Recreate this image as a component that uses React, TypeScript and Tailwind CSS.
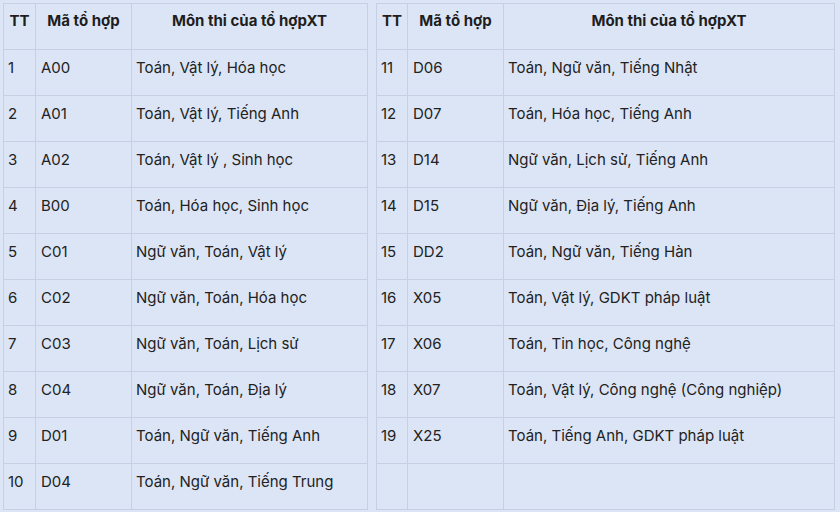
const left = [
  ['1', 'A00', 'Toán, Vật lý, Hóa học'],
  ['2', 'A01', 'Toán, Vật lý, Tiếng Anh'],
  ['3', 'A02', 'Toán, Vật lý , Sinh học'],
  ['4', 'B00', 'Toán, Hóa học, Sinh học'],
  ['5', 'C01', 'Ngữ văn, Toán, Vật lý'],
  ['6', 'C02', 'Ngữ văn, Toán, Hóa học'],
  ['7', 'C03', 'Ngữ văn, Toán, Lịch sử'],
  ['8', 'C04', 'Ngữ văn, Toán, Địa lý'],
  ['9', 'D01', 'Toán, Ngữ văn, Tiếng Anh'],
  ['10', 'D04', 'Toán, Ngữ văn, Tiếng Trung'],
];

const right = [
  ['11', 'D06', 'Toán, Ngữ văn, Tiếng Nhật'],
  ['12', 'D07', 'Toán, Hóa học, Tiếng Anh'],
  ['13', 'D14', 'Ngữ văn, Lịch sử, Tiếng Anh'],
  ['14', 'D15', 'Ngữ văn, Địa lý, Tiếng Anh'],
  ['15', 'DD2', 'Toán, Ngữ văn, Tiếng Hàn'],
  ['16', 'X05', 'Toán, Vật lý, GDKT pháp luật'],
  ['17', 'X06', 'Toán, Tin học, Công nghệ'],
  ['18', 'X07', 'Toán, Vật lý, Công nghệ (Công nghiệp)'],
  ['19', 'X25', 'Toán, Tiếng Anh, GDKT pháp luật'],
  ['', '', ''],
];

function ComboTable({ rows, widths }: { rows: string[][]; widths: string[] }) {
  const th = 'h-[46px] border border-[#c6d0e2] pt-[7px] align-top text-center font-bold text-[#1e1e1e]';
  const td = 'h-[46px] border border-[#c6d0e2] pl-1 pt-2 align-top text-left text-[#222]';
  return (
    <table className="border-collapse table-fixed text-[15px] leading-5">
      <colgroup>
        {widths.map((w, i) => (
          <col key={i} className={w} />
        ))}
      </colgroup>
      <thead>
        <tr>
          <th className={th}>TT</th>
          <th className={th}>Mã tổ hợp</th>
          <th className={th}>Môn thi của tổ hợpXT</th>
        </tr>
      </thead>
      <tbody>
        {rows.map((r, i) => (
          <tr key={i}>
            <td className={td}>{r[0]}</td>
            <td className={td + ' pl-[5px]'}>{r[1]}</td>
            <td className={td}>{r[2]}</td>
          </tr>
        ))}
      </tbody>
    </table>
  );
}

export default function App() {
  return (
    <div
      className="w-[840px] h-[512px] overflow-hidden bg-[#dce5f6] pt-[3px] pl-[3px] flex items-start gap-[8px]"
      style={{ fontFamily: 'Inter, "Noto Sans", sans-serif' }}
    >
      <ComboTable rows={left} widths={['w-[32px]', 'w-[96px]', 'w-[236px]']} />
      <ComboTable rows={right} widths={['w-[31px]', 'w-[96px]', 'w-[331px]']} />
    </div>
  );
}
